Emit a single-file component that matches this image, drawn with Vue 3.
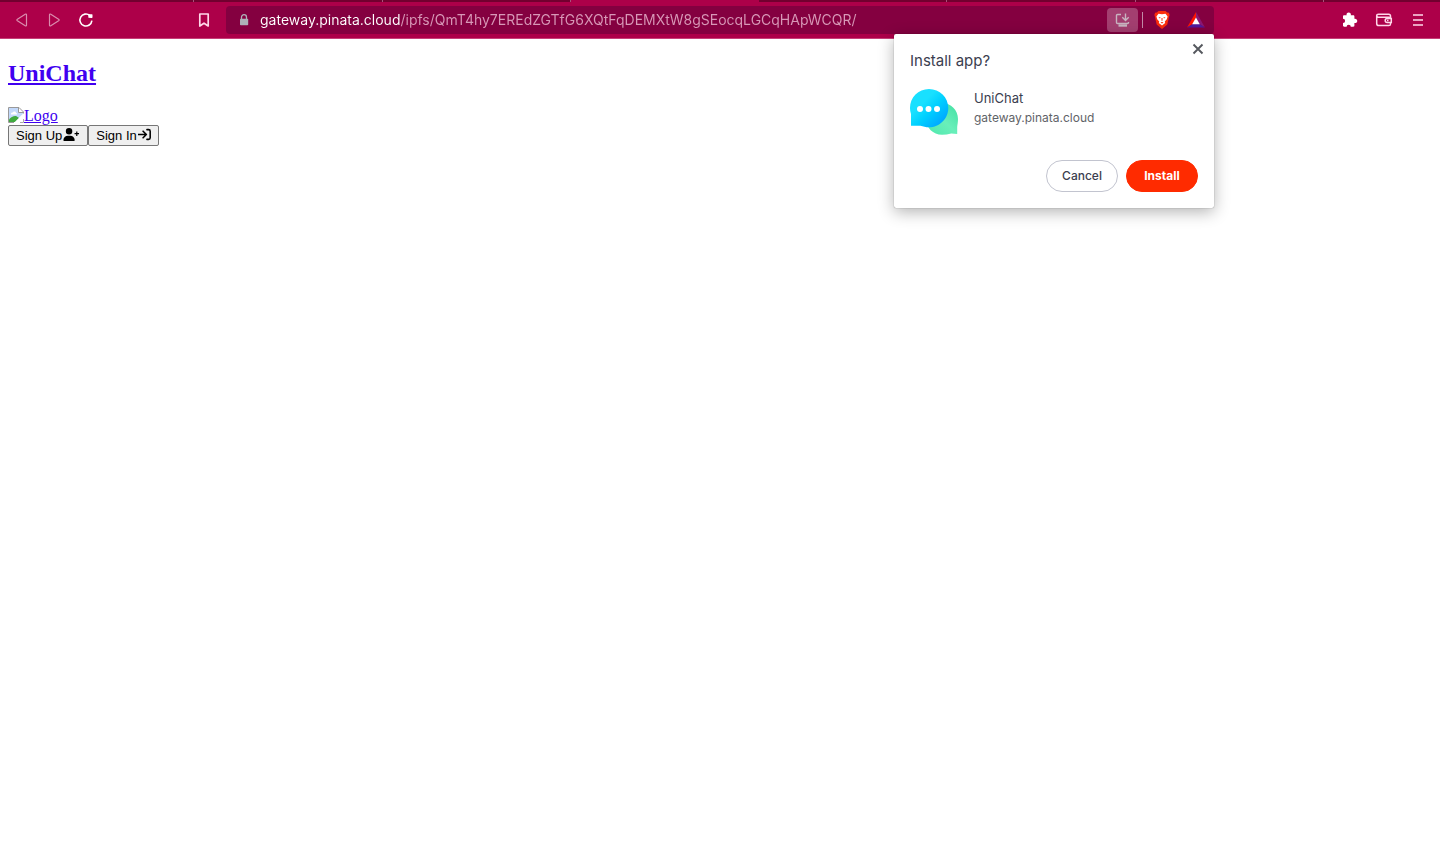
<script setup>
import { ref } from 'vue'

const url = ref('gateway.pinata.cloud/ipfs/QmT4hy7EREdZGTfG6XQtFqDEMXtW8gSEocqLGCqHApWCQR/')
const tabs = [false, false, false, true, false, false, false]
</script>

<template>
  <div class="browser">
    <header>
      <div class="tab-strip">
        <span class="tab-lead"></span>
        <span v-for="(active, i) in tabs" :key="i" class="tab" :class="{ active }"></span>
        <span class="tab-tail"></span>
      </div>
      <div class="toolbar">
        <nav class="navigation">
          <button class="tool faded" aria-label="Back">
            <svg width="16" height="16" viewBox="0 0 16 16"><path d="M12.500 2.800v10.400c0 .8-.7 1-1.300.6L3.400 8.800c-.7-.5-.7-1.100 0-1.600l7.800-5c.6-.4 1.300-.2 1.300.6z" /></svg>
          </button>
          <button class="tool faded" aria-label="Forward">
            <svg width="16" height="16" viewBox="0 0 16 16"><path d="M3.500 2.800v10.400c0 .8.7 1 1.300.6l7.800-5c.7-.5.7-1.100 0-1.600l-7.800-5C4.200 1.800 3.500 2 3.500 2.800z" /></svg>
          </button>
          <button class="tool" aria-label="Reload">
            <svg width="16" height="16" viewBox="0 0 16 16"><path d="M13.900 8.700A6 6 0 1 1 11.800 3.400" stroke-width="1.600" /><path d="M10.200 2.200h3.700c.5 0 .6.200.6.600v2.500c0 .7-.5.9-1.100.7l-3-.2z" fill="#fff" stroke="none" /></svg>
          </button>
          <button class="tool bookmark" aria-label="Bookmark this page">
            <svg width="16" height="16" viewBox="0 0 16 16"><path d="M3.800 2h8.400v12L8 11.200 3.800 14z" stroke-width="1.700" stroke="#ffd8e9" stroke-linejoin="round" /></svg>
          </button>
        </nav>
        <div class="address">
          <svg class="lock" width="10" height="12" viewBox="0 0 10 12"><path d="M2.500 5.500V3.200a2.500 2.500 0 0 1 5 0v2.300" fill="none" stroke="#aeb1b8" stroke-width="1.300" /><rect x="1" y="4.800" width="8.200" height="6.400" rx=".8" fill="#aeb1b8" /></svg>
          <input v-model="url" type="text" aria-label="Address" spellcheck="false" />
          <button class="app-install" aria-label="Install UniChat">
            <svg width="16" height="16" viewBox="0 0 16 16" fill="none" stroke="#c8b4c0" stroke-width="1.400"><path d="M6 2.500H2.500a1 1 0 0 0-1 1v7a1 1 0 0 0 1 1h10a1 1 0 0 0 1-1V10M10.500 1.500v6.500M7.300 5.300l3.200 3.200 3.200-3.200" /><path d="M3.500 13.500h8.500" stroke-width="2.400" /></svg>
          </button>
          <span class="divider"></span>
          <button class="extension" aria-label="Brave Shields">
            <svg width="16" height="18" viewBox="0 0 16 18"><path d="M4.500 0h7l1.700 1.500 1.700.3.700 2.200-.5 1.500-1.800 8.100L8 18l-5.300-4.400L.9 5.500.4 4l.7-2.200 1.700-.3z" fill="#fb2d0c" /><path d="M4.500 2.800 8 3.200l3.500-.4 2.100 2.700-.8 2.800-2 2.200.4 1.600L8 14.600l-3.200-2.500.4-1.600-2-2.200-.8-2.800z" fill="#fff" /><path d="m4.500 6 2.200.6-.8.900zM11.500 6l-2.200.6.8.9zM7.500 7h1v2.500L8 10l-.5-.5zM6.500 11.500 8 11l1.500.5L8 12.500z" fill="#fb2d0c" /></svg>
          </button>
          <button class="extension" aria-label="Brave Rewards">
            <svg width="18" height="16" viewBox="0 0 18 16"><path d="M9 0 0 15.500 5.700 12 9 6z" fill="#ff1500" /><path d="m9 0 9 15.500-5.700-3.500L9 6z" fill="#8b1874" /><path d="M0 15.500 5.700 12h6.600l5.700 3.500z" fill="#51199b" /><path d="m9 5.500 3.800 6.700H5.200z" fill="#fff" /></svg>
          </button>

          <section class="install-dialog" role="dialog" aria-labelledby="install-title">
            <button class="close" aria-label="Close">
              <svg width="12" height="12" viewBox="0 0 12 12"><path d="m1.500 1.500 9 9m0-9-9 9" stroke="#55585e" stroke-width="1.900" /></svg>
            </button>
            <h1 id="install-title">Install app?</h1>
            <div class="app-info">
              <svg width="48" height="48" viewBox="0 0 48 48">
                <defs>
                  <linearGradient id="blue" x1="0" y1="0" x2="1" y2="1"><stop offset=".35" stop-color="#19e0ff" /><stop offset=".55" stop-color="#00d0ff" /><stop offset="1" stop-color="#0095ff" /></linearGradient>
                  <linearGradient id="green" x1="0" y1="1" x2="1" y2="0"><stop stop-color="#4de8ac" /><stop offset=".5" stop-color="#69efba" /><stop offset="1" stop-color="#40dfa1" /></linearGradient>
                </defs>
                <path d="M32 15c9 0 16 7.200 16 16 0 3-.6 6-.8 8v7l-6-.5c-3 .8-6 1.200-9.200 1.200-8.800 0-16-7-16-15.800S23.200 15 32 15z" fill="url(#green)" />
                <path d="M19 1c10.700 0 19.300 8.400 19.300 19S29.700 39.300 19 39.300c-3 0-6-.6-8.500-1.500H1V26C.3 24 0 22 0 20 0 9.400 8.300 1 19 1z" fill="url(#blue)" />
                <circle cx="10" cy="21" r="3" fill="#fff" /><circle cx="18.500" cy="21" r="3" fill="#fff" /><circle cx="27" cy="21" r="3" fill="#fff" />
              </svg>
              <div>
                <p class="name">UniChat</p>
                <p class="origin">gateway.pinata.cloud</p>
              </div>
            </div>
            <div class="actions">
              <button class="pill">Cancel</button>
              <button class="pill primary">Install</button>
            </div>
          </section>
        </div>
        <div class="tools">
          <button class="tool" aria-label="Extensions">
            <svg width="16" height="16" viewBox="0 0 16 16"><path d="M1 4.500c0-.8.500-1.200 1.200-1.200h2.400a2.200 2.200 0 1 1 4.200 0h2.400c.8 0 1.200.4 1.200 1.200v2.300a2.200 2.200 0 1 1 0 4.200v2.600c0 .8-.4 1.200-1.200 1.200H8.800a2.100 2.100 0 0 0-4.200 0H2.200c-.8 0-1.200-.4-1.200-1.200V11a2.100 2.100 0 0 0 0-4.200z" fill="#fff" stroke="none" /></svg>
          </button>
          <button class="tool" aria-label="Wallet">
            <svg width="18" height="16" viewBox="0 0 18 16"><path d="M15.500 6V4c0-1-.7-1.700-1.700-1.700H3.500C2.400 2.300 1.700 3 1.700 4v7.500c0 1.300.8 2.100 2.100 2.100h10c1 0 1.700-.7 1.700-1.700V10.500M2 4.300c.4.700 1 1 2 1h10c1 0 1.500.4 1.500 1.200M16.300 6.400h-4.100a2 2 0 0 0 0 4h4.100zM12 8.400h1.500" stroke="#ffd8e9" stroke-width="1.500" /></svg>
          </button>
          <button class="tool" aria-label="Menu">
            <svg width="12" height="12" viewBox="0 0 12 12"><path d="M1 1h10M1 6h10M1 11h10" stroke="#ffd8e9" stroke-width="1.600" /></svg>
          </button>
        </div>
      </div>
    </header>

    <main>
      <h2><a href="#">UniChat</a></h2>
      <a class="logo" href="#">
        <svg width="16" height="16" viewBox="0 0 16 16"><path d="M.5.500h10l5 5v10H.5z" fill="#fff" /><path d="M1 1h9.500v4.500H15V7L7 15H1z" fill="#c3d9fb" /><path d="M3 7c0-1.200 1-1.700 1.800-1.400C5.300 4 8 4.300 8 6c1 0 1.500 1 .8 1.600H3z" fill="#fff" /><path d="M1 15v-2.500c2-2.700 5-3.900 7.500-3.300L11 11l-4 4z" fill="#3faa3e" /><path d="M15.500 7v-2l-4.500-4.500H.5v15H6M10.500.500v5h5" fill="none" stroke="#999" /><path d="m16 6-9.500 9.500H9l7-7z" fill="#fff" /><path d="M12 15.500h3.500V12" fill="none" stroke="#aaa" /></svg><span>Logo</span>
      </a>
      <div class="account">
        <button>Sign Up<svg width="17" height="13" viewBox="0 0 640 512"><path d="M224 256A128 128 0 1 0 224 0a128 128 0 0 0 0 256zm-46 48C80 304 0 384 0 482c0 17 13 30 30 30h388c17 0 30-13 30-30 0-98-80-178-178-178zM504 312v-64h-64v-48h64v-64h48v64h64v48h-64v64z" /></svg></button>
        <button>Sign In<svg width="13" height="13" viewBox="0 0 512 512"><path d="M20 256h310M200 126l130 130-130 130M352 64h64c35 0 64 29 64 64v256c0 35-29 64-64 64h-64" fill="none" stroke="#000" stroke-width="62" stroke-linecap="round" stroke-linejoin="round" /></svg></button>
      </div>
    </main>
  </div>
</template>

<style>
body {
  margin: 0;
  background: #fff;
}
</style>

<style scoped>
.browser {
  min-height: 100vh;
  font-family: "Liberation Serif", serif;
}

header {
  background: #ad0049;
  border-bottom: 1px solid #c64078;
  font-family: Inter, sans-serif;
}

button {
  font-family: inherit;
}

.tab-strip {
  display: flex;
  height: 2px;
}

.tab-lead {
  width: 6px;
  background: #72002f;
}

.tab {
  flex: 1;
  box-sizing: border-box;
  background: #72002f;
  border-right: 1px solid #a6537a;
}

.tab.active {
  background: #ad0049;
  border-color: #ad0049;
}

.tab-tail {
  flex: 0 0 116px;
  background: #72002f;
}

.toolbar {
  display: flex;
  align-items: center;
  height: 36px;
}

.navigation,
.tools {
  box-sizing: border-box;
  display: flex;
  align-items: center;
  flex: 0 0 226px;
}

.navigation {
  padding: 0 14px;
  gap: 16px;
}

.tools {
  justify-content: flex-end;
  padding-right: 14px;
  gap: 18px;
}

.tool {
  display: flex;
  align-items: center;
  justify-content: center;
  width: 16px;
  height: 28px;
  padding: 0;
  border: 0;
  background: none;
}

.tool svg {
  flex: none;
  fill: none;
  stroke: #fff;
  stroke-width: 1.2;
}

.faded {
  opacity: .55;
}

.bookmark {
  margin-left: auto;
}

.address {
  position: relative;
  box-sizing: border-box;
  display: flex;
  align-items: center;
  flex: 1;
  min-width: 0;
  height: 28px;
  padding: 0 9px 0 13px;
  border-radius: 4px;
  background: #840040;
}

.lock {
  flex: none;
  margin-right: 11px;
}

.address input {
  flex: 1;
  min-width: 0;
  height: 26px;
  padding: 0;
  margin-bottom: 2px;
  border: 0;
  outline: 0;
  color: transparent;
  background: linear-gradient(to right, #fff 140px, #d898b7 140px);
  -webkit-background-clip: text;
  background-clip: text;
  font: 14px Inter, sans-serif;
}

.app-install {
  display: flex;
  align-items: center;
  justify-content: center;
  width: 31px;
  height: 24px;
  padding: 0;
  border: 0;
  border-radius: 4px;
  background: #a33f70;
}

.divider {
  width: 1px;
  height: 16px;
  margin: 0 11px 0 4px;
  background: #c28aa7;
}

.extension {
  display: flex;
  padding: 0;
  border: 0;
  background: none;
}

.extension + .extension {
  margin-left: 17px;
}

.install-dialog {
  position: absolute;
  z-index: 1;
  top: 28px;
  right: 0;
  box-sizing: border-box;
  width: 320px;
  padding: 16px;
  border-radius: 2px;
  background: #fff;
  box-shadow: 0 0 1px rgba(0, 0, 0, .6), 0 4px 16px rgba(0, 0, 0, .3);
  color: #3b3e4f;
}

.close {
  position: absolute;
  top: 9px;
  right: 10px;
  display: flex;
  padding: 0;
  border: 0;
  background: none;
}

h1 {
  margin: 0 0 16px;
  font-size: 15px;
  font-weight: 400;
  line-height: 22px;
}

.app-info {
  display: flex;
  gap: 16px;
}

.app-info p {
  margin: 0;
}

.name {
  font-size: 13px;
  line-height: 20px;
}

.origin {
  color: #5f6368;
  font-size: 12px;
  line-height: 20px;
}

.actions {
  display: flex;
  justify-content: flex-end;
  gap: 8px;
  margin-top: 24px;
}

.pill {
  width: 72px;
  height: 32px;
  padding: 0 0 2px;
  border: 1px solid #c2c4cf;
  border-radius: 16px;
  background: #fff;
  color: #3b3e4f;
  font-size: 12px;
  font-weight: 500;
}

.primary {
  border-color: #ff2b00;
  background: #ff2b00;
  color: #fff;
  font-weight: 700;
}

main {
  padding: 20px 8px;
}

main a {
  color: #4000f0;
}

h2 {
  margin: 0 0 20px;
  font-size: 24px;
  line-height: 28px;
}

.logo {
  display: flex;
  align-items: flex-start;
  height: 18px;
  font-size: 16px;
  line-height: 18px;
}

.account {
  display: flex;
}

.account button {
  display: flex;
  align-items: center;
  height: 21px;
  padding: 0 7px;
  border: 1px solid #767676;
  border-radius: 2px;
  background: #efefef;
  color: #000;
  font: 13px "Liberation Sans", sans-serif;
}

.account svg {
  margin-left: 1px;
  margin-bottom: 2px;
}
</style>
